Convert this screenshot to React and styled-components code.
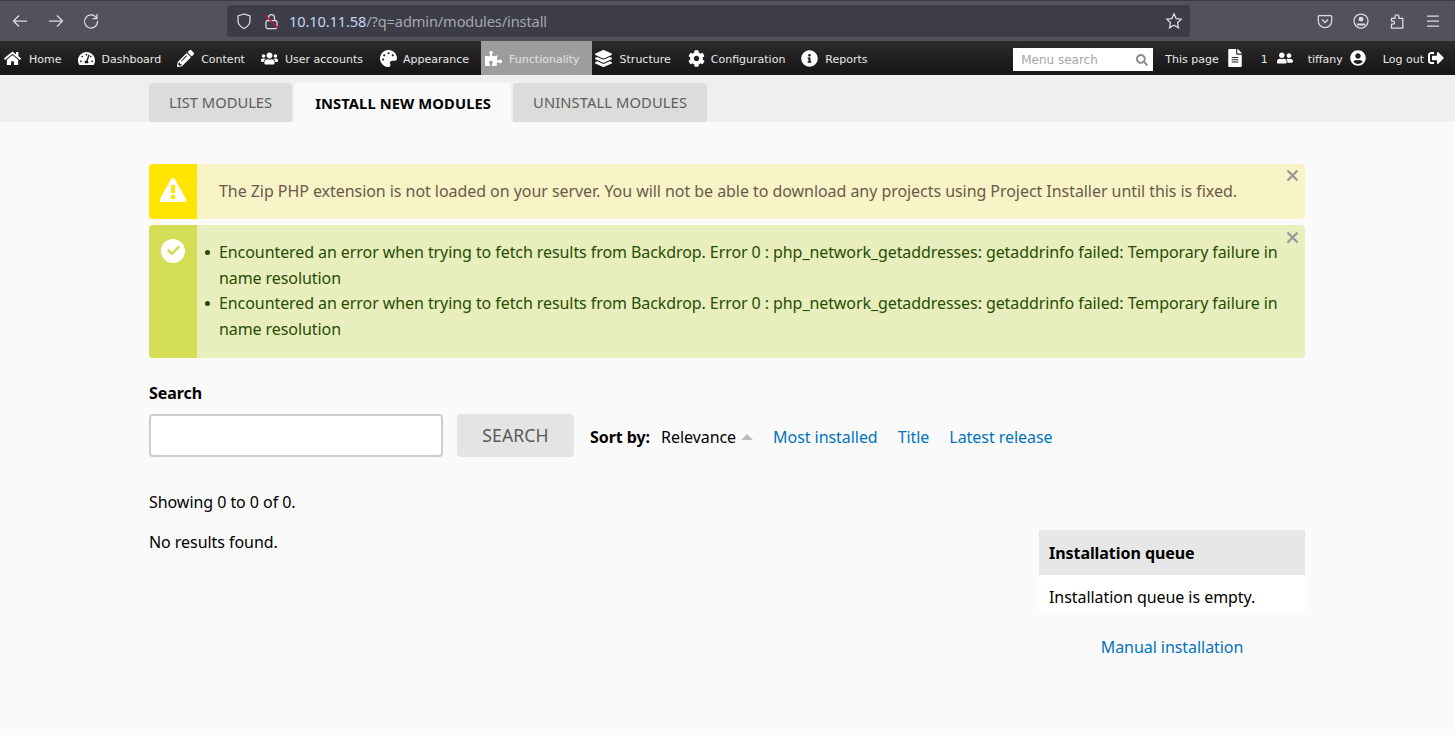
import React from "react";
import styled, { createGlobalStyle } from "styled-components";
import { FaHome, FaTachometerAlt, FaPencilAlt, FaUsers, FaUserFriends, FaPalette, FaPuzzlePiece, FaLayerGroup, FaCog, FaInfoCircle, FaSearch, FaFileAlt, FaUserCircle, FaSignOutAlt, FaCheck } from "react-icons/fa";

const Global = createGlobalStyle`
  html, body { margin: 0; padding: 0; background: #fafafa; }
  body { font-family: "Noto Sans", "Open Sans", sans-serif; font-size: 16px; color: #000; overflow: hidden; }
  * { box-sizing: border-box; }
`;
const Page = styled.div`width: 1455px; height: 735px; display: flex; flex-direction: column; overflow: hidden;`;
const Browser = styled.div`height: 41px; flex: none; background: #52525e; border-top: 1px solid #3a3a48; display: flex; align-items: center; color: #fbfbfe;`;
const NavButtons = styled.div`width: 227px; padding-left: 11px; display: flex; gap: 17.5px; align-items: center; flex: none;`;
const Glyph = styled.svg`width: ${p => p.$s || 18}px; height: ${p => p.$s || 18}px; fill: none; stroke: #dcdce2; stroke-width: 1.25; flex: none; display: block;`;
const UrlBar = styled.div`width: 963px; height: 32px; background: #3c3d48; border-radius: 4px; display: flex; align-items: center; padding: 0 7px 0 8px; flex: none;`;
const Url = styled.div`font-family: "Noto Sans", sans-serif; font-size: 14.6px; color: #a6a7ae; margin-left: 8px; flex: 1; letter-spacing: -0.12px;`;
const Host = styled.span`color: #c4d7f0;`;
const Tools = styled.div`flex: 1; display: flex; justify-content: flex-end; align-items: center; gap: 20px; padding-right: 14px;`;
const AdminBar = styled.div`height: 34px; flex: none; display: flex; align-items: center; justify-content: space-between; background: linear-gradient(#2b2b2b, #151515); font-family: "DejaVu Sans", sans-serif; font-size: 11px; color: #e8e8e8;`;
const Menu = styled.div`display: flex; align-items: stretch; height: 100%;`;
const MenuItem = styled.div`display: flex; align-items: center; gap: ${p => p.$gap}px; padding: 2px ${p => p.$r}px 0 ${p => p.$l}px; ${p => p.$active && "background: #9d9d9d; color: #d9d9d9; margin-left: 4px; text-shadow: 0 0 1px rgba(255,255,255,.35);"} svg { font-size: 17px; color: #fff; flex: none; margin-top: -2px; }`;
const Right = styled.div`display: flex; align-items: center; height: 100%; padding-top: 2px;`;
const MenuSearch = styled.div`width: 140px; height: 23px; background: #fff; color: #a6a6a6; font-size: 12px; display: flex; align-items: center; justify-content: space-between; padding: 2px 5px 0 8px; margin-right: 12px; svg { color: #8a8a8a; font-size: 12px; }`;
const RightItem = styled.div`display: flex; align-items: center; gap: ${p => p.$gap || 7}px; margin-right: ${p => p.$mr || 0}px; svg { font-size: ${p => p.$size || 16}px; color: #fff; margin-top: -2px; }`;
const TabBar = styled.div`height: 47px; flex: none; background: #efefef; padding: 8px 0 0 149px; display: flex; gap: 2px;`;
const Tab = styled.div`height: 39px; padding: 0 20px 2px; display: flex; align-items: center; font-size: 14.72px; letter-spacing: ${p => p.$wide ? ".1px" : "0"}; border-radius: 4px 4px 0 0; background: ${p => p.$active ? "#fafafa" : "#dcdcda"}; color: ${p => p.$active ? "#000" : "#5d5d5d"}; font-weight: ${p => p.$active ? 700 : 400}; ${p => p.$active && "padding: 0 20px 0 21px;"}`;
const Main = styled.div`padding: 42px 150px 0 149px; flex: 1; letter-spacing: -0.055px;`;
const Alert = styled.div`display: flex; border-radius: 4px; overflow: hidden; position: relative; background: ${p => p.$bg}; color: ${p => p.$fg}; margin-bottom: 6px; line-height: 25.6px;`;
const AlertSide = styled.div`width: 48px; flex: none; background: ${p => p.$bg}; display: flex; justify-content: center; align-items: flex-start; padding-top: ${p => p.$top}px;`;
const AlertBody = styled.div`flex: 1; padding: ${p => p.$pad};`;
const Close = styled.svg`position: absolute; right: 6px; top: ${p => p.$top}px; width: 13px; height: 13px; stroke: #9a9a9a; stroke-width: 2.4; fill: none;`;
const List = styled.ul`margin: 0; padding: 0 0 0 22px; list-style: none; letter-spacing: -0.08px;`;
const Item = styled.li`position: relative; &::before { content: ""; position: absolute; left: -14px; top: 10px; width: 5px; height: 5px; border-radius: 50%; background: currentColor; }`;
const CheckBadge = styled.div`width: 24px; height: 24px; border-radius: 50%; background: #fff; color: #d3dd55; display: flex; align-items: center; justify-content: center; font-size: 13px;`;
const Label = styled.div`font-weight: 700; margin-top: 23px; line-height: 25px;`;
const SearchRow = styled.div`display: flex; align-items: center; margin-top: 8px; height: 43px;`;
const Input = styled.div`width: 294px; height: 43px; background: #fff; border: 2px solid #cdcdcd; border-radius: 4px;`;
const Button = styled.div`width: 117px; height: 43px; margin-left: 14px; background: #e4e4e4; color: #5a5a5a; border-radius: 4px; display: flex; align-items: center; justify-content: center; font-size: 17.6px; letter-spacing: .1px;`;
const Sort = styled.div`display: flex; align-items: center; margin-left: 16px; padding-top: 3px;`;
const SortLabel = styled.span`font-weight: 700; margin-right: 11px;`;
const Link = styled.a`color: #0074bd; text-decoration: none;`;
const SortLink = styled(Link)`margin-left: 20px;`;
const Arrow = styled.span`width: 0; height: 0; margin: 0 0 0 5px; border-left: 6px solid transparent; border-right: 6px solid transparent; border-bottom: 6px solid #bdbdbd;`;
const Showing = styled.div`margin-top: 33px; line-height: 25px;`;
const Results = styled.div`display: flex; justify-content: space-between; margin-top: 16px;`;
const Queue = styled.div`width: 266px; margin-top: -1px;`;
const QueueHead = styled.div`height: 45px; background: #e7e7e7; font-weight: 700; padding: 2px 10px 0; display: flex; align-items: center;`;
const QueueBody = styled.div`height: 39px; background: #fff; padding: 6px 10px 0; display: flex; align-items: center;`;
const QueueLink = styled.div`text-align: center; margin-top: 21px; line-height: 25px;`;

const Back = () => <Glyph viewBox="0 0 18 18"><path d="M16 9H2.5M8 3.5 2.5 9 8 14.5" /></Glyph>;
const Forward = () => <Glyph viewBox="0 0 18 18"><path d="M2 9h13.5M10 3.5 15.5 9 10 14.5" /></Glyph>;
const Reload = () => <Glyph viewBox="0 0 18 18"><path d="M14.5 6A6.5 6.5 0 1 0 15.5 9M15 2v4.5h-4.5" /></Glyph>;
const Shield = () => <Glyph viewBox="0 0 18 18"><path d="M9 2 3 4v5c0 4 3 6 6 7.5 3-1.5 6-3.5 6-7.5V4z" /></Glyph>;
const Lock = () => <Glyph viewBox="0 0 18 18" style={{ marginLeft: 10 }}><rect x="3" y="8.5" width="11" height="8" rx="1.5" /><path d="M5.5 8.5V5.5a3 3 0 0 1 6 0v3" /><path d="M1.5 2.5 15.5 16.5" stroke="#b01840" strokeWidth="1.6" /></Glyph>;
const Star = () => <Glyph viewBox="0 0 18 18"><path d="M9 1.8 11.2 6.6l5 .6-3.7 3.5 1 5.1L9 13.3l-4.5 2.5 1-5.1L1.8 7.2l5-.6z" /></Glyph>;
const Pocket = () => <Glyph $s={16} viewBox="0 0 16 16"><path d="M2.3 2.5h11.4a1 1 0 0 1 1 1V8a6.7 6.7 0 0 1-13.4 0V3.5a1 1 0 0 1 1-1z" /><path d="M5 6.5 8 9.5 11 6.5" /></Glyph>;
const Account = () => <Glyph $s={16} viewBox="0 0 16 16"><circle cx="8" cy="8" r="7" /><circle cx="8" cy="6.2" r="2.4" fill="#dcdcde" stroke="none" /><path d="M3.8 11.5h8.4" strokeWidth="2" /></Glyph>;
const Ext = () => <Glyph $s={16} viewBox="0 0 16 16"><path d="M2.5 15V11.2H4a1.6 1.6 0 0 0 0-3.2H2.5V5.3H6V3.8a2 2 0 0 1 4 0V5.3h3.8V15z" /></Glyph>;
const Burger = () => <Glyph $s={16} viewBox="0 0 16 16"><path d="M2 3h12M2 8h12M2 13h12" /></Glyph>;
const X = ({ top }) => <Close $top={top} viewBox="0 0 13 13"><path d="M1.5 1.5l10 10M11.5 1.5l-10 10" /></Close>;
const Warning = () => <svg width="30" height="28" viewBox="0 0 30 28"><path d="M15 2c-1 0-1.6.6-2 1.3L2 23c-.8 1.5 0 3 1.7 3h22.6c1.7 0 2.5-1.5 1.7-3L17 3.3C16.6 2.6 16 2 15 2z" fill="#fff" /><rect x="13" y="9" width="4" height="8" fill="#ffe500" /><rect x="13" y="19" width="4" height="4" fill="#ffe500" /></svg>;

const items = [
  { I: FaHome, t: "Home", l: 4, r: 8, g: 8 },
  { I: FaTachometerAlt, t: "Dashboard", l: 9, r: 8, g: 6 },
  { I: FaPencilAlt, t: "Content", l: 8, r: 8, g: 7 },
  { I: FaUsers, t: "User accounts", l: 8, r: 8, g: 7 },
  { I: FaPalette, t: "Appearance", l: 9, r: 8, g: 6 },
  { I: FaPuzzlePiece, t: "Functionality", l: 4, r: 12, g: 7, a: true },
  { I: FaLayerGroup, t: "Structure", l: 3, r: 8, g: 8 },
  { I: FaCog, t: "Configuration", l: 9, r: 8, g: 6 },
  { I: FaInfoCircle, t: "Reports", l: 8, r: 8, g: 7 },
];
const err = "Encountered an error when trying to fetch results from Backdrop. Error 0 : php_network_getaddresses: getaddrinfo failed: Temporary failure in name resolution";

export default function App() {
  return (
    <Page>
      <Global />
      <Browser>
        <NavButtons><Back /><Forward /><Reload /></NavButtons>
        <UrlBar>
          <Shield /><Lock />
          <Url><Host>10.10.11.58</Host>/?q=admin/modules/install</Url>
          <Star />
        </UrlBar>
        <Tools><Pocket /><Account /><Ext /><Burger /></Tools>
      </Browser>
      <AdminBar>
        <Menu>
          {items.map(({ I, t, l, r, g, a }) => <MenuItem key={t} $active={a} $l={l} $r={r} $gap={g}><I />{t}</MenuItem>)}
        </Menu>
        <Right>
          <MenuSearch>Menu search<FaSearch /></MenuSearch>
          <RightItem $mr={17} $size={18}>This page<FaFileAlt /></RightItem>
          <RightItem $mr={15} $gap={9}>1<FaUserFriends /></RightItem>
          <RightItem $mr={17}>tiffany<FaUserCircle /></RightItem>
          <RightItem $mr={11} $gap={4}>Log out<FaSignOutAlt /></RightItem>
        </Right>
      </AdminBar>
      <TabBar>
        <Tab>LIST MODULES</Tab>
        <Tab $active $wide>INSTALL NEW MODULES</Tab>
        <Tab $wide>UNINSTALL MODULES</Tab>
      </TabBar>
      <Main>
        <Alert $bg="#f9f4c8" $fg="#6b5a49">
          <AlertSide $bg="#ffe500" $top={12}><Warning /></AlertSide>
          <AlertBody $pad="15px 40px 14px 22px">The Zip PHP extension is not loaded on your server. You will not be able to download any projects using Project Installer until this is fixed.</AlertBody>
          <X top={5} />
        </Alert>
        <Alert $bg="#e9eebf" $fg="#264d00">
          <AlertSide $bg="#d3dd55" $top={14}><CheckBadge><FaCheck /></CheckBadge></AlertSide>
          <AlertBody $pad="15.4px 20px 15.6px 0">
            <List><Item>{err}</Item><Item>{err}</Item></List>
          </AlertBody>
          <X top={6} />
        </Alert>
        <Label>Search</Label>
        <SearchRow>
          <Input />
          <Button>SEARCH</Button>
          <Sort>
            <SortLabel>Sort by:</SortLabel>Relevance<Arrow />
            <SortLink>Most installed</SortLink><SortLink>Title</SortLink><SortLink>Latest release</SortLink>
          </Sort>
        </SearchRow>
        <Showing>Showing 0 to 0 of 0.</Showing>
        <Results>
          <div>No results found.</div>
          <Queue>
            <QueueHead>Installation queue</QueueHead>
            <QueueBody>Installation queue is empty.</QueueBody>
            <QueueLink><Link>Manual installation</Link></QueueLink>
          </Queue>
        </Results>
      </Main>
    </Page>
  );
}
